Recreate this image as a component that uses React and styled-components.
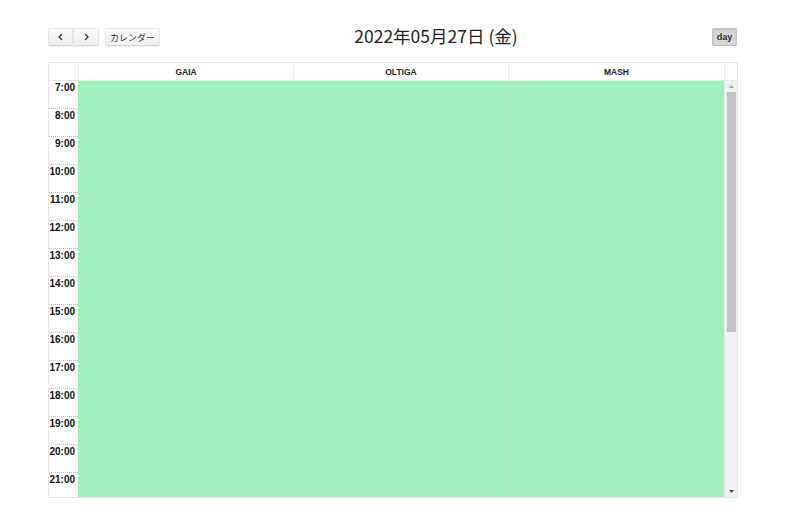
import React from "react";
import styled, { createGlobalStyle } from "styled-components";

const Global = createGlobalStyle`
  html, body { margin: 0; padding: 0; background: #fff; }
  body { font-family: "Liberation Sans", Arial, "Noto Sans CJK JP", sans-serif; color: #222; }
`;

const Page = styled.div`
  padding: 28px 57px 0 48px;
  width: 689px;
`;

const Toolbar = styled.div`
  display: flex;
  justify-content: space-between;
  align-items: flex-start;
  height: 18px;
`;

const Group = styled.div`
  display: flex;
  align-items: center;
  gap: 6px;
`;

const Joined = styled.div`
  display: flex;
`;

const Button = styled.button`
  height: 18px;
  width: ${(p) => p.$w}px;
  padding: 0;
  margin: 0;
  display: flex;
  align-items: center;
  justify-content: center;
  font-family: "Liberation Sans", Arial, "Noto Sans CJK JP", sans-serif;
  font-size: ${(p) => p.$fs || 9}px;
  font-weight: ${(p) => (p.$bold ? 700 : 400)};
  color: #333;
  border: 1px solid ${(p) => (p.$active ? "#c4c4c4" : "#e6e6e6")};
  border-bottom-color: ${(p) => (p.$active ? "#b8b8b8" : "#d2d2d2")};
  border-radius: ${(p) => p.$radius || "2px"};
  background: ${(p) =>
    p.$active ? "#d6d6d6" : "linear-gradient(#fbfbfb, #eeeeee)"};
  box-shadow: ${(p) =>
    p.$active
      ? "inset 0 1px 2px rgba(0,0,0,0.12)"
      : "0 1px 1px rgba(0,0,0,0.06)"};
`;

const Title = styled.h2`
  margin: 0;
  font-family: "Noto Sans CJK JP", "Noto Sans", sans-serif;
  font-weight: 400;
  font-size: 17.5px;
  line-height: 18px;
  margin-top: -1px;
  color: #222;
`;

const Table = styled.div`
  margin-top: 16px;
  border: 1px solid #e6e6e6;
  width: 688px;
`;

const HeaderRow = styled.div`
  display: grid;
  grid-template-columns: 29px 215px 215px 216px 13px;
  height: 17px;
  border-bottom: 1px solid #e6e6e6;
`;

const HeadCell = styled.div`
  display: flex;
  align-items: center;
  justify-content: center;
  font-size: 8.5px;
  font-weight: 700;
  color: #222;
  border-left: ${(p) => (p.$first ? "none" : "1px solid #ececec")};
`;

const Body = styled.div`
  display: flex;
  height: 416px;
  overflow: hidden;
`;

const TimeCol = styled.div`
  width: 29px;
  flex: none;
`;

const TimeSlot = styled.div`
  height: 28px;
  box-sizing: border-box;
  border-bottom: 1px dotted #bdbdbd;
  font-size: 10px;
  font-weight: 700;
  color: #111;
  text-align: right;
  padding: 1px 3px 0 0;
  line-height: 11px;
`;

const Columns = styled.div`
  display: grid;
  grid-template-columns: 215px 215px 216px;
  flex: none;
  background: #9ef1bd;
`;

const Column = styled.div`
  border-left: ${(p) => (p.$first ? "none" : "1px solid #b7e6c8")};
`;

const Scrollbar = styled.div`
  width: 12px;
  flex: none;
  background: #f1f1f1;
  display: flex;
  flex-direction: column;
  align-items: center;
  border-left: 1px solid #ececec;
`;

const Arrow = styled.div`
  height: 11px;
  display: flex;
  align-items: center;
  justify-content: center;
`;

const Thumb = styled.div`
  width: 9px;
  height: 240px;
  background: #c1c1c1;
`;

const Track = styled.div`
  flex: 1;
`;

const times = [];
for (let h = 7; h <= 21; h++) times.push(`${h}:00`);

export default function App() {
  return (
    <>
      <Global />
      <Page>
        <Toolbar>
          <Group>
            <Joined>
              <Button $w={25} $fs={11} $radius="2px 0 0 2px">
                <svg width="7" height="8" viewBox="0 0 7 8">
                  <path d="M5 1 L2 4 L5 7" stroke="#333" strokeWidth="1.3" fill="none" />
                </svg>
              </Button>
              <Button $w={26} $fs={11} $radius="0 2px 2px 0">
                <svg width="7" height="8" viewBox="0 0 7 8">
                  <path d="M2 1 L5 4 L2 7" stroke="#333" strokeWidth="1.3" fill="none" />
                </svg>
              </Button>
            </Joined>
            <Button $w={55}>カレンダー</Button>
          </Group>
          <Title>2022年05月27日 (金)</Title>
          <Group>
            <Button $w={25} $bold $active>
              day
            </Button>
          </Group>
        </Toolbar>
        <Table>
          <HeaderRow>
            <HeadCell $first />
            <HeadCell>GAIA</HeadCell>
            <HeadCell>OLTIGA</HeadCell>
            <HeadCell>MASH</HeadCell>
            <HeadCell />
          </HeaderRow>
          <Body>
            <TimeCol>
              {times.map((t) => (
                <TimeSlot key={t}>{t}</TimeSlot>
              ))}
            </TimeCol>
            <Columns>
              <Column $first />
              <Column />
              <Column />
            </Columns>
            <Scrollbar>
              <Arrow>
                <svg width="5" height="3" viewBox="0 0 5 3">
                  <path d="M0 3 L2.5 0 L5 3 Z" fill="#a3a3a3" />
                </svg>
              </Arrow>
              <Thumb />
              <Track />
              <Arrow>
                <svg width="5" height="3" viewBox="0 0 5 3">
                  <path d="M0 0 L2.5 3 L5 0 Z" fill="#505050" />
                </svg>
              </Arrow>
            </Scrollbar>
          </Body>
        </Table>
      </Page>
    </>
  );
}
